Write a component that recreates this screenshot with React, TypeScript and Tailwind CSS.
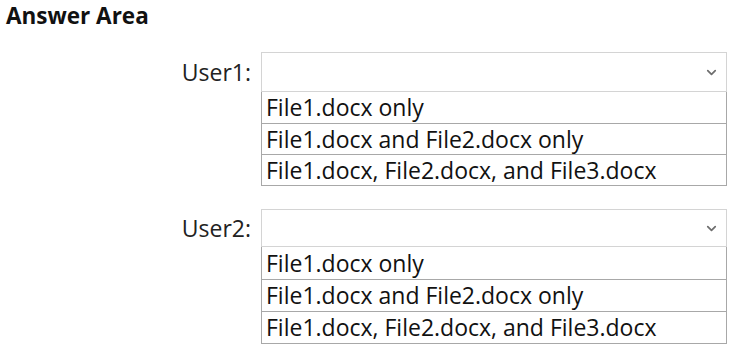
import { ChevronDown } from 'lucide-react'

const options = ['File1.docx only', 'File1.docx and File2.docx only', 'File1.docx, File2.docx, and File3.docx']

function UserRow({ label, selectH, rowH }: { label: string; selectH: string; rowH: string }) {
  return (
    <div className="flex">
      <div className={`flex w-[252px] items-center justify-end pr-[1px] ${selectH} self-start`}>
        <span className="text-[23px] leading-none text-[#222]">{label}</span>
      </div>
      <div className="ml-[9px] w-[466px]">
        <div className={`flex items-center justify-end border border-[#d4d4d4] bg-white pr-[7px] ${selectH}`}>
          <ChevronDown size={15} strokeWidth={2.75} className="text-[#6e6e6e]" />
        </div>
        <div className="border border-t-0 border-[#a8a8a8]">
          {options.map((o, i) => (
            <div
              key={o}
              className={`flex items-center px-[4px] text-[23px] leading-none text-[#111] ${rowH} ${i > 0 ? 'border-t border-[#a8a8a8]' : ''}`}
            >
              {o}
            </div>
          ))}
        </div>
      </div>
    </div>
  )
}

export default function App() {
  return (
    <div className="h-[348px] w-[733px] bg-white font-['Open_Sans',sans-serif]">
      <div className="px-[6px] pt-[1px] text-[22.5px] font-bold leading-[30px] text-[#111]">Answer Area</div>
      <div className="mt-[21px]">
        <UserRow label="User1:" selectH="h-[40px]" rowH="h-[31px]" />
      </div>
      <div className="mt-[23px]">
        <UserRow label="User2:" selectH="h-[38px]" rowH="h-[32px]" />
      </div>
    </div>
  )
}
